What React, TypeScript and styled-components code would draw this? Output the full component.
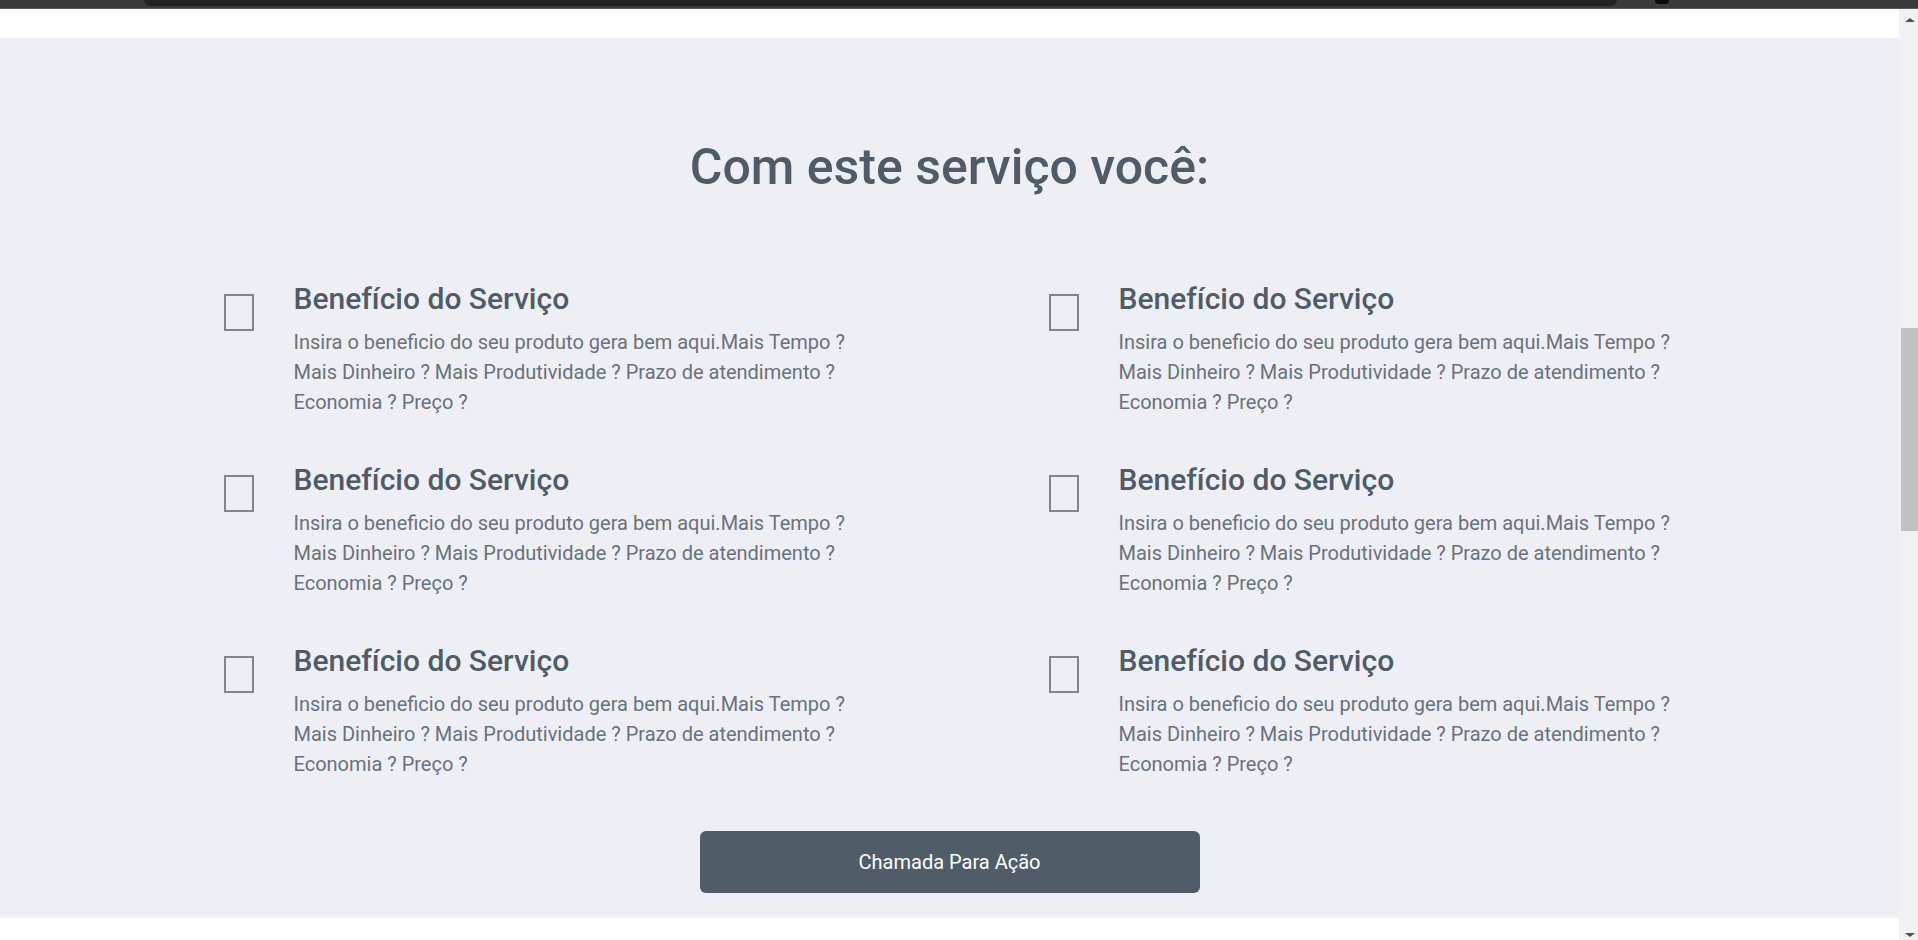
import React from "react";
import styled, { createGlobalStyle } from "styled-components";

const GlobalStyle = createGlobalStyle`
  html, body { margin: 0; padding: 0; height: 100%; overflow: hidden; }
  body { font-family: Roboto, "Liberation Sans", Arial, sans-serif; background: #ffffff; }
  #root { height: 100%; }
`;

const Frame = styled.div`
  display: flex;
  flex-direction: column;
  width: 1918px;
  height: 940px;
  overflow: hidden;
`;

const ChromeBar = styled.div`
  position: relative;
  height: 8px;
  background: #3a3a3a;
  border-bottom: 1px solid #5a5a5a;
  flex: none;
`;

const ChromeTab = styled.div`
  position: absolute;
  left: 144px;
  width: 1473px;
  top: 0;
  height: 6px;
  background: #232327;
  border-radius: 0 0 10px 10px;
`;

const ChromeDot = styled.div`
  position: absolute;
  left: 1655px;
  width: 14px;
  top: 0;
  height: 4px;
  background: #0a0a0a;
  border-radius: 0 0 5px 5px;
`;

const Viewport = styled.div`
  display: flex;
  flex: 1;
  min-height: 0;
`;

const Page = styled.div`
  flex: 1;
  display: flex;
  flex-direction: column;
  background: #ffffff;
`;

const TopStrip = styled.div`
  height: 29px;
  background: #ffffff;
`;

const Section = styled.section`
  height: 880px;
  box-sizing: border-box;
  background: #eeeff4;
  padding-top: 99px;
  display: flex;
  flex-direction: column;
  align-items: center;
`;

const Title = styled.h2`
  margin: 0;
  font-family: Roboto, "Liberation Sans", sans-serif;
  font-weight: 500;
  font-size: 50px;
  line-height: 60px;
  color: #4f5b66;
  text-align: center;
`;

const Grid = styled.div`
  margin-top: 84px;
  width: 1650px;
  display: grid;
  grid-template-columns: 825px 825px;
  row-gap: 45px;
`;

const Item = styled.div`
  display: flex;
  align-items: flex-start;
  padding-left: 99px;
  gap: 40px;
`;

const Box = styled.div`
  flex: none;
  margin-top: 13px;
  width: 30px;
  height: 37px;
  box-sizing: border-box;
  border: 2px solid #7e878f;
`;

const Text = styled.div`
  width: 580px;
`;

const ItemTitle = styled.h3`
  margin: 0 0 10px;
  font-family: Roboto, "Liberation Sans", sans-serif;
  font-weight: 500;
  font-size: 30px;
  line-height: 36px;
  color: #4f5b66;
`;

const ItemBody = styled.p`
  margin: 0;
  font-family: Roboto, "Liberation Sans", sans-serif;
  font-weight: 400;
  font-size: 20px;
  line-height: 30px;
  color: #67727d;
`;

const Button = styled.button`
  margin-top: 52px;
  width: 500px;
  height: 62px;
  border: none;
  border-radius: 6px;
  background: #505d68;
  color: #ffffff;
  font-family: Roboto, "Liberation Sans", sans-serif;
  font-size: 20px;
  font-weight: 400;
  cursor: pointer;
`;

const Scrollbar = styled.div`
  flex: none;
  width: 19px;
  background: #f1f1f1;
  display: flex;
  flex-direction: column;
  align-items: center;
  justify-content: space-between;
  padding: 0 0 0 2px;
  box-sizing: border-box;
`;

const Arrow = styled.div<{ $down?: boolean }>`
  margin: ${(p) => (p.$down ? "0 0 3px" : "9px 0 0")};
  width: 0;
  height: 0;
  border-left: 5px solid transparent;
  border-right: 5px solid transparent;
  ${(p) =>
    p.$down
      ? "border-top: 4px solid #505050;"
      : "border-bottom: 4px solid #505050;"}
`;

const Track = styled.div`
  flex: 1;
  width: 100%;
  display: flex;
  flex-direction: column;
  padding-top: 306px;
`;

const Thumb = styled.div`
  width: 17px;
  height: 203px;
  background: #c1c1c1;
`;

const items = Array.from({ length: 6 });

export default function App() {
  return (
    <>
      <GlobalStyle />
      <Frame>
        <ChromeBar>
          <ChromeTab />
          <ChromeDot />
        </ChromeBar>
        <Viewport>
          <Page>
            <TopStrip />
            <Section>
              <Title>Com este serviço você:</Title>
              <Grid>
                {items.map((_, i) => (
                  <Item key={i}>
                    <Box />
                    <Text>
                      <ItemTitle>Benefício do Serviço</ItemTitle>
                      <ItemBody>
                        Insira o beneficio do seu produto gera bem aqui.Mais
                        Tempo ? Mais Dinheiro ? Mais Produtividade ? Prazo de
                        atendimento ? Economia ? Preço ?
                      </ItemBody>
                    </Text>
                  </Item>
                ))}
              </Grid>
              <Button>Chamada Para Ação</Button>
            </Section>
          </Page>
          <Scrollbar>
            <Arrow />
            <Track>
              <Thumb />
            </Track>
            <Arrow $down />
          </Scrollbar>
        </Viewport>
      </Frame>
    </>
  );
}
